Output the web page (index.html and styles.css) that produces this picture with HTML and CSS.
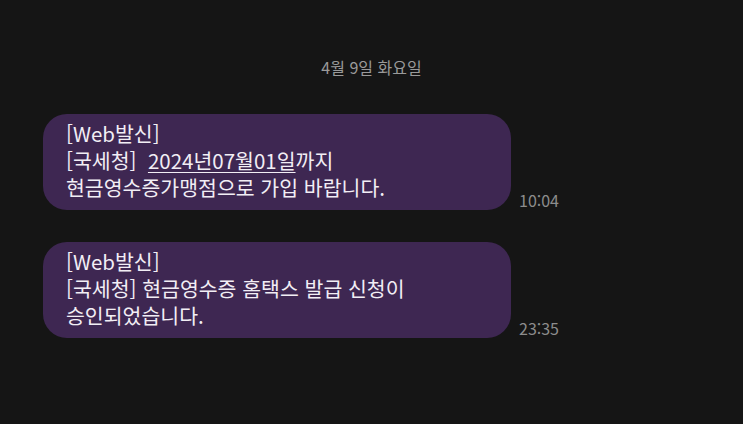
FILE: index.html
```html
<!DOCTYPE html>
<html lang="ko">
<head>
<meta charset="utf-8">
<link rel="stylesheet" href="styles.css">
</head>
<body>
<div class="chat">
  <div class="date">4월 9일 화요일</div>
  <div class="row">
    <div class="bubble">[Web발신]<br>[국세청]&nbsp; <span class="link">2024년07월01일</span>까지<br>현금영수증가맹점으로 가입 바랍니다.</div>
    <div class="time">10:04</div>
  </div>
  <div class="row">
    <div class="bubble">[Web발신]<br>[국세청] 현금영수증 홈택스 발급 신청이<br>승인되었습니다.</div>
    <div class="time">23:35</div>
  </div>
</div>
</body>
</html>
```
FILE: styles.css
```css
html, body {
  margin: 0;
  padding: 0;
  background: #151515;
  height: 100%;
}
body {
  font-family: "Noto Sans CJK KR", "Noto Sans", sans-serif;
  overflow: hidden;
}
.chat {
  display: flex;
  flex-direction: column;
  padding: 56px 0 0 43px;
  gap: 32px;
}
.date {
  width: 657px;
  text-align: center;
  color: #9a9a9a;
  font-size: 16px;
  line-height: 22px;
  margin-bottom: 4px;
}
.row {
  display: flex;
  align-items: flex-end;
  gap: 8px;
}
.bubble {
  box-sizing: border-box;
  width: 468px;
  height: 96px;
  background: #3e2752;
  border-radius: 24px;
  padding: 6px 23px 0 23px;
  color: #f2eef5;
  font-size: 20.5px;
  line-height: 27px;
  white-space: nowrap;
}
.link {
  text-decoration: underline;
  text-decoration-thickness: 1px;
  text-underline-offset: 3px;
}
.time {
  color: #8c8c8c;
  font-size: 16px;
  line-height: 20px;
  padding-bottom: 0;
}
```
